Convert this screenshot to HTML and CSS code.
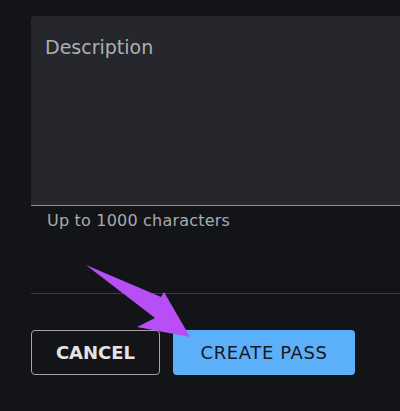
FILE: index.html
```html
<!DOCTYPE html>
<html>
<head>
<meta charset="utf-8">
<link rel="stylesheet" href="styles.css">
</head>
<body>
<div class="page">
  <div class="field">
    <div class="label">Description</div>
  </div>
  <div class="helper">Up to 1000 characters</div>
  <div class="divider"></div>
  <div class="actions">
    <button class="btn btn-cancel">CANCEL</button>
    <button class="btn btn-primary">CREATE PASS</button>
  </div>
</div>
<svg class="arrow" width="400" height="411" viewBox="0 0 400 411">
  <polygon points="86,265 161,297 164,292 190,337 137,327 155,318" fill="#b84ef5"/>
</svg>
</body>
</html>
```
FILE: styles.css
```css
html, body {
  margin: 0;
  padding: 0;
  background: #131418;
  overflow: hidden;
  width: 400px;
  height: 411px;
}
body {
  position: relative;
  font-family: "DejaVu Sans", sans-serif;
}
.page {
  padding: 16px 0 0 31px;
}
.field {
  height: 169px;
  background: #25272c;
  border-bottom: 1px solid #8d8e91;
  border-top-left-radius: 4px;
  padding: 20px 0 0 14px;
}
.label {
  font-size: 19px;
  line-height: 22px;
  color: #aeafb2;
}
.helper {
  margin-top: 5px;
  padding-left: 16px;
  font-size: 16px;
  line-height: 19px;
  letter-spacing: 0.2px;
  color: #a9aaad;
}
.divider {
  margin-top: 63px;
  height: 1px;
  background: #3b3c40;
}
.actions {
  display: flex;
  gap: 13px;
  margin-top: 36px;
}
.btn {
  height: 45px;
  border-radius: 4px;
  font-family: "DejaVu Sans", sans-serif;
  font-size: 18px;
  display: flex;
  align-items: center;
  justify-content: center;
  padding: 0;
  cursor: pointer;
}
.btn-cancel {
  width: 129px;
  background: transparent;
  border: 1px solid #a3a4a7;
  color: #e4e4e4;
  font-weight: bold;
}
.btn-primary {
  width: 182px;
  background: #5cb0fa;
  border: none;
  color: #17191d;
  letter-spacing: 0.6px;
}
.arrow {
  position: absolute;
  left: 0;
  top: 0;
}
```
